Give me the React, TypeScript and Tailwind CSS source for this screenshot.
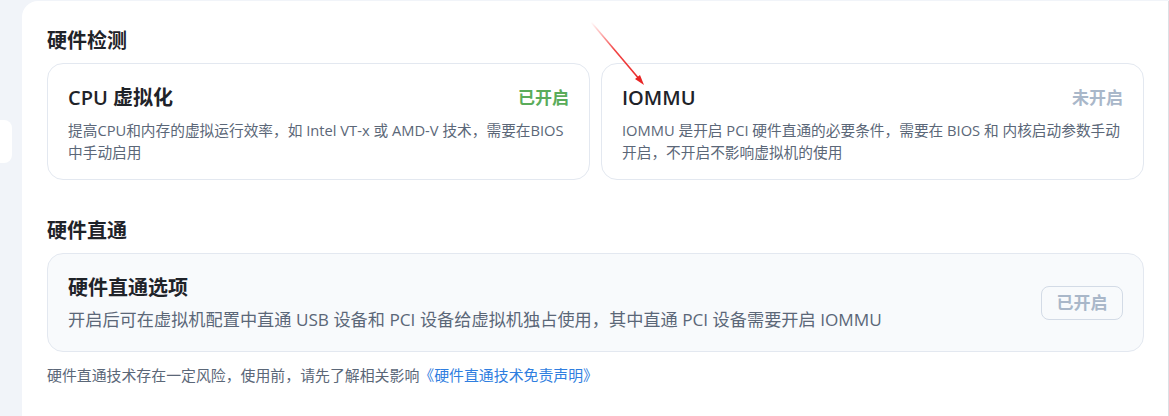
import React from 'react';

const font = { fontFamily: '"Open Sans", "Noto Sans CJK SC", sans-serif' };

interface DetectItem {
  title: string;
  enabled: boolean;
  lines: string[];
}

const detectItems: DetectItem[] = [
  {
    title: 'CPU 虚拟化',
    enabled: true,
    lines: ['提高CPU和内存的虚拟运行效率，如 Intel VT-x 或 AMD-V 技术，需要在BIOS', '中手动启用'],
  },
  {
    title: 'IOMMU',
    enabled: false,
    lines: ['IOMMU 是开启 PCI 硬件直通的必要条件，需要在 BIOS 和 内核启动参数手动', '开启，不开启不影响虚拟机的使用'],
  },
];

const DetectCard: React.FC<{ item: DetectItem }> = ({ item }) => (
  <div className="min-w-0 flex-1 basis-0 rounded-2xl border border-[#e3e8f0] bg-white px-5 pt-5 pb-[16px]">
    <div className="flex items-center justify-between">
      <h3 className="text-[20px] leading-[28px] font-semibold text-[#1f2329]">{item.title}</h3>
      {item.enabled ? (
        <span className="text-[17px] font-bold text-[#5aac5a]">已开启</span>
      ) : (
        <span className="text-[17px] font-bold text-[#a9b7c9]">未开启</span>
      )}
    </div>
    <p className="mt-[7px] text-[14.7px] leading-[22px] text-[#5b6778] whitespace-nowrap">
      {item.lines[0]}
      <br />
      {item.lines[1]}
    </p>
  </div>
);

export default function App() {
  return (
    <div className="relative flex h-[416px] w-[1169px] overflow-hidden bg-[#f1f4f9]" style={font}>
      {/* left rail */}
      <div className="w-[22px] shrink-0">
        <div className="mt-[120px] h-[43px] w-[12px] rounded-r-lg bg-white" />
      </div>

      {/* main panel */}
      <div className="mt-px min-w-0 flex-1 rounded-tl-2xl border-r border-[#dcdfe4] bg-white pl-[25px] pr-[24px] pt-[26px]">
        <h2 className="text-[20px] leading-[28px] font-bold text-[#1f2329]">硬件检测</h2>
        <div className="mt-2 flex gap-[11px]">
          {detectItems.map(item => (
            <DetectCard key={item.title} item={item} />
          ))}
        </div>

        <h2 className="mt-[37px] text-[20px] leading-[28px] font-bold text-[#1f2329]">硬件直通</h2>
        <div className="mt-2 flex items-center justify-between rounded-2xl border border-[#e3e8f0] bg-[#f8fafc] pl-5 pr-5 pt-5 pb-[19px]">
          <div>
            <h3 className="text-[20px] leading-[28px] font-bold text-[#1f2329]">硬件直通选项</h3>
            <p className="mt-[6px] text-[17.2px] leading-[24px] text-[#5b6778]">
              开启后可在虚拟机配置中直通 USB 设备和 PCI 设备给虚拟机独占使用，其中直通 PCI 设备需要开启 IOMMU
            </p>
          </div>
          <button className="h-[34px] w-[82px] rounded-lg border border-[#d3dbe6] text-[17px] font-bold text-[#a9b7c9]">
            已开启
          </button>
        </div>

        <p className="mt-3 text-[14.9px] leading-[22px] text-[#5b6778]">
          硬件直通技术存在一定风险，使用前，请先了解相关影响
          <a className="text-[#2f7ee0]" href="#">《硬件直通技术免责声明》</a>
        </p>
      </div>

      {/* annotation arrow */}
      <svg className="pointer-events-none absolute left-0 top-0" width="1169" height="416">
        <defs>
          <linearGradient id="arrowFade" x1="591" y1="22" x2="643" y2="84" gradientUnits="userSpaceOnUse">
            <stop offset="0" stopColor="#ff3b3b" stopOpacity="0" />
            <stop offset="0.45" stopColor="#f03030" stopOpacity="0.9" />
            <stop offset="1" stopColor="#e82525" />
          </linearGradient>
        </defs>
        <line x1="591" y1="22" x2="640" y2="80" stroke="url(#arrowFade)" strokeWidth="1.6" />
        <polygon points="644,85 635,79 640,75" fill="#e82525" />
      </svg>
    </div>
  );
}
